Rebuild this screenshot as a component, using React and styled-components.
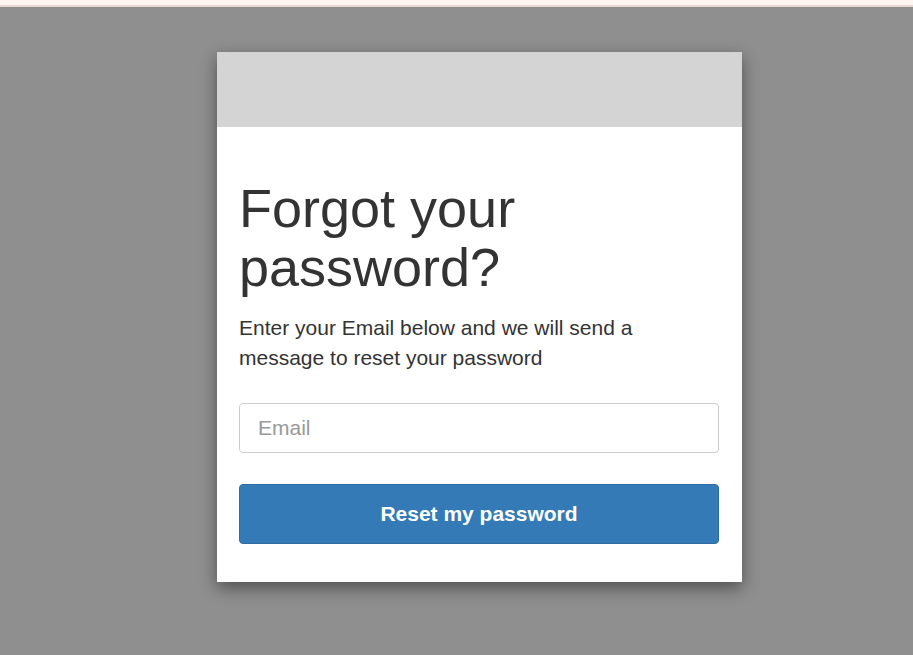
import React from 'react';
import styled, { createGlobalStyle } from 'styled-components';

const GlobalStyle = createGlobalStyle`
  html, body {
    margin: 0;
    padding: 0;
    height: 100%;
  }
  body {
    background: #8f8f8f;
    font-family: "Liberation Sans", Arial, sans-serif;
    color: #333;
  }
`;

const TopStrip = styled.div`
  height: 5px;
  background: #fff4f1;
  border-bottom: 2px solid #e6d6cf;
`;

const Page = styled.div`
  display: flex;
  justify-content: flex-start;
  padding: 45px 0 0 217px;
`;

const Card = styled.div`
  width: 525px;
  background: #ffffff;
  box-shadow: 0 6px 16px rgba(0, 0, 0, 0.45);
  display: flex;
  flex-direction: column;
`;

const CardHeader = styled.div`
  height: 75px;
  background: #d4d4d4;
`;

const CardBody = styled.div`
  padding: 52px 23px 38px 22px;
  display: flex;
  flex-direction: column;
`;

const Title = styled.h1`
  margin: 0;
  font-size: 54px;
  font-weight: 400;
  line-height: 59px;
  color: #333;
`;

const Lead = styled.p`
  margin: 16px 0 0;
  font-size: 21px;
  line-height: 30px;
  color: #333;
`;

const EmailInput = styled.input`
  box-sizing: border-box;
  margin-top: 30px;
  width: 480px;
  height: 50px;
  padding: 0 18px;
  border: 1px solid #ccc;
  border-radius: 4px;
  font-family: inherit;
  font-size: 21px;
  color: #555;
  outline: none;

  &::placeholder {
    color: #999;
  }
`;

const SubmitButton = styled.button`
  box-sizing: border-box;
  margin-top: 31px;
  width: 480px;
  height: 60px;
  border: 1px solid #2e6da4;
  border-radius: 4px;
  background: #337ab7;
  color: #fff;
  font-family: inherit;
  font-size: 21px;
  font-weight: 700;
  cursor: pointer;
`;

export default function App() {
  return (
    <>
      <GlobalStyle />
      <TopStrip />
      <Page>
        <Card>
          <CardHeader />
          <CardBody>
            <Title>Forgot your password?</Title>
            <Lead>Enter your Email below and we will send a message to reset your password</Lead>
            <EmailInput type="email" placeholder="Email" />
            <SubmitButton type="button">Reset my password</SubmitButton>
          </CardBody>
        </Card>
      </Page>
    </>
  );
}
